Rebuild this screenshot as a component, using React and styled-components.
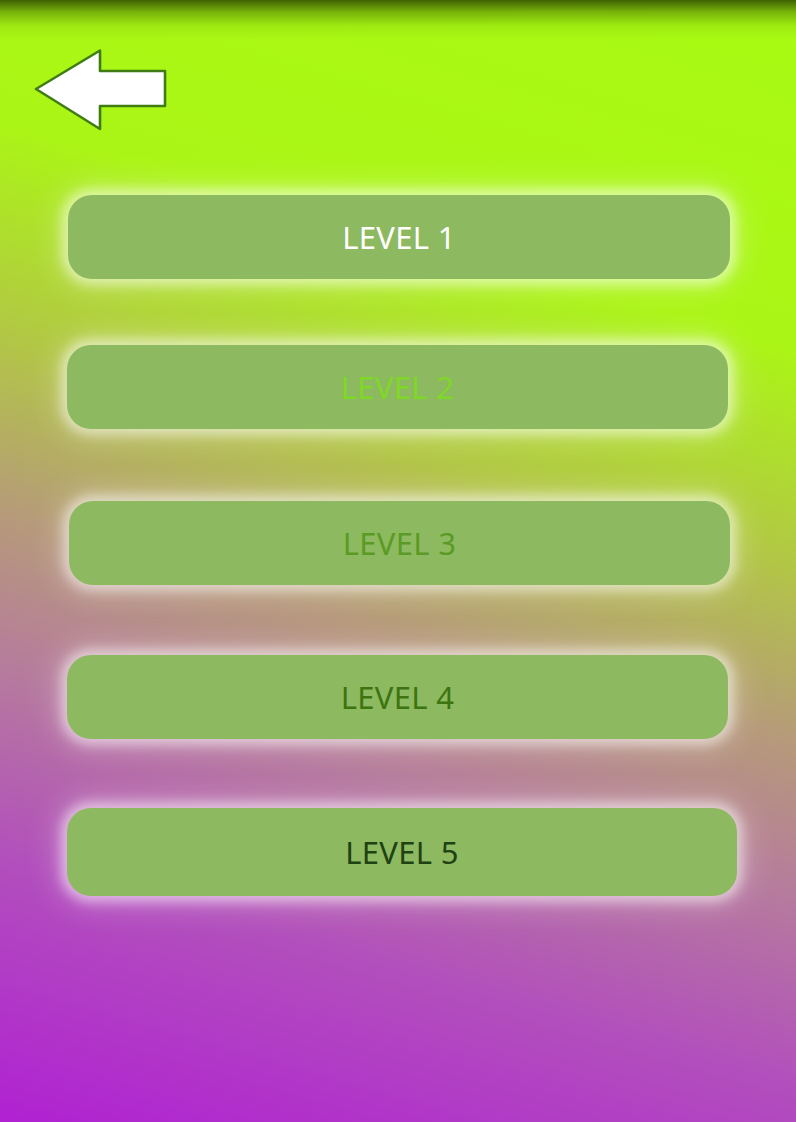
import React from "react";
import styled, { createGlobalStyle } from "styled-components";

const GlobalStyle = createGlobalStyle`
  html, body {
    margin: 0;
    padding: 0;
    height: 100%;
  }
  #root {
    height: 100%;
  }
`;

// spacing in the original isn't uniform, so each level carries its own offsets
const levels = [
  { n: 1, color: "#ffffff", w: 662, h: 84, shift: 0, top: 0 },
  { n: 2, color: "#80d826", w: 661, h: 84, shift: -1, top: 66 },
  { n: 3, color: "#5b9a24", w: 661, h: 84, shift: 1, top: 72 },
  { n: 4, color: "#3d7410", w: 661, h: 84, shift: -1, top: 70 },
  { n: 5, color: "#1e4212", w: 670, h: 88, shift: -1, top: 69 },
];

export default function App() {
  return (
    <>
      <GlobalStyle />
      <Screen>
        <TopShade />
        <Header>
          <BackButton aria-label="back">
            <svg width="136" height="86" viewBox="0 0 136 86">
              <path
                d="M2 40 L66 1.5 L66 22 L131 22 L131 57 L66 57 L66 80 Z"
                fill="#ffffff"
                stroke="#3f7d12"
                strokeWidth="2.6"
                strokeLinejoin="round"
              />
            </svg>
          </BackButton>
        </Header>
        <LevelList>
          {levels.map(l => (
            <LevelButton
              key={l.n}
              $color={l.color}
              $w={l.w}
              $h={l.h}
              $shift={l.shift}
              $top={l.top}
            >
              LEVEL {l.n}
            </LevelButton>
          ))}
        </LevelList>
      </Screen>
    </>
  );
}

const Screen = styled.div`
  position: relative;
  width: 796px;
  height: 1122px;
  overflow: hidden;
  background: linear-gradient(
    196deg,
    #a8fb12 0%,
    #abf516 26%,
    #b2c646 42%,
    #b69a7a 55%,
    #b67c9c 66%,
    #b250bc 80%,
    #b021d2 100%
  );
  font-family: "Noto Sans", "Open Sans", sans-serif;
`;

const TopShade = styled.div`
  position: absolute;
  top: 0;
  left: 0;
  right: 0;
  height: 40px;
  background: linear-gradient(
    180deg,
    rgba(45, 70, 0, 0.85) 0%,
    rgba(70, 110, 0, 0.5) 30%,
    rgba(110, 170, 5, 0.18) 65%,
    rgba(120, 200, 10, 0) 100%
  );
  pointer-events: none;
`;

const Header = styled.div`
  padding: 49px 0 0 34px;
  height: 146px;
  box-sizing: border-box;
`;

const BackButton = styled.button`
  border: none;
  background: transparent;
  padding: 0;
  cursor: pointer;
  display: block;
`;

const LevelList = styled.div`
  display: flex;
  flex-direction: column;
  padding-top: 49px;
  padding-left: 68px;
`;

const LevelButton = styled.button`
  width: ${p => p.$w}px;
  height: ${p => p.$h}px;
  margin: ${p => p.$top}px 0 0 ${p => p.$shift}px;
  border: none;
  border-radius: 24px;
  background-color: #8db960;
  color: ${p => p.$color};
  font-family: "Noto Sans", "Open Sans", sans-serif;
  font-size: 31px;
  font-weight: 400;
  letter-spacing: 0.3px;
  display: flex;
  align-items: center;
  justify-content: center;
  cursor: pointer;
  box-shadow: 0 0 12px 6px rgba(255, 255, 255, 0.5),
    0 0 30px 12px rgba(255, 255, 255, 0.22);
`;
